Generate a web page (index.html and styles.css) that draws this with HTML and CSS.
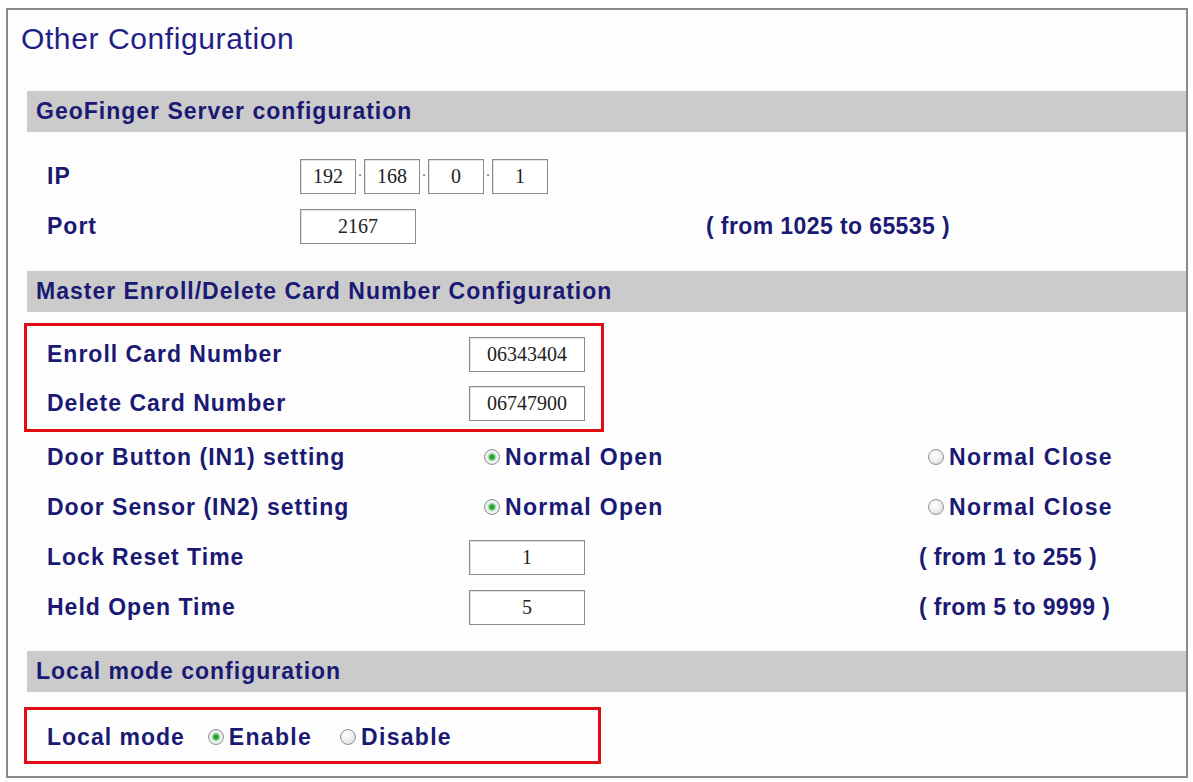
FILE: index.html
```html
<!DOCTYPE html>
<html lang="en">
<head>
  <meta charset="UTF-8" />
  <title>Other Configuration</title>
  <link rel="stylesheet" href="styles.css">
</head>
<body>

<div class="panel">
  <h1 class="title">Other Configuration</h1>

  <div class="bar bar-server">GeoFinger Server configuration</div>
  <div class="server">
    <div class="row">
      <span class="label">IP</span>
      <span class="ip">
        <input class="box ip-part" type="text" value="192" readonly><span class="dot">.</span><input class="box ip-part" type="text" value="168" readonly><span class="dot">.</span><input class="box ip-part" type="text" value="0" readonly><span class="dot">.</span><input class="box ip-part" type="text" value="1" readonly>
      </span>
    </div>
    <div class="row">
      <span class="label">Port</span>
      <span><input class="box" type="text" value="2167" readonly></span>
      <span class="label hint">( from 1025 to 65535 )</span>
    </div>
  </div>

  <div class="bar">Master Enroll/Delete Card Number Configuration</div>
  <div class="card">
    <div class="marked marked-card">
      <div class="row">
        <span class="label">Enroll Card Number</span>
        <span><input class="box" type="text" value="06343404" readonly></span>
      </div>
      <div class="row">
        <span class="label">Delete Card Number</span>
        <span><input class="box" type="text" value="06747900" readonly></span>
      </div>
    </div>
    <div class="row">
      <span class="label">Door Button (IN1) setting</span>
      <span class="opt opt-mid"><i class="radio on"></i>Normal Open</span>
      <span class="opt opt-right"><i class="radio"></i>Normal Close</span>
    </div>
    <div class="row">
      <span class="label">Door Sensor (IN2) setting</span>
      <span class="opt opt-mid"><i class="radio on"></i>Normal Open</span>
      <span class="opt opt-right"><i class="radio"></i>Normal Close</span>
    </div>
    <div class="row">
      <span class="label">Lock Reset Time</span>
      <span><input class="box" type="text" value="1" readonly></span>
      <span class="label hint">( from 1 to 255 )</span>
    </div>
    <div class="row">
      <span class="label">Held Open Time</span>
      <span><input class="box" type="text" value="5" readonly></span>
      <span class="label hint">( from 5 to 9999 )</span>
    </div>
  </div>

  <div class="bar bar-local">Local mode configuration</div>
  <div class="marked marked-local">
    <div class="local-row">
      <span class="label">Local mode</span>
      <span class="opt"><i class="radio on"></i>Enable</span>
      <span class="opt"><i class="radio"></i>Disable</span>
    </div>
  </div>
</div>

</body>
</html>
```

FILE: styles.css
```css
body {
  margin: 0;
  background: #fff;
  font-family: 'Liberation Sans', Arial, sans-serif;
  color: #1a1a74;
}

.panel {
  margin: 8px 0 0 6px;
  width: 1182px;
  height: 770px;
  box-sizing: border-box;
  border: 2px solid #8a8a8a;
  background: #fdfdfd;
}

.title {
  margin: 12px 0 0 13px;
  font-size: 30px;
  font-weight: normal;
  line-height: 34px;
  letter-spacing: 0.6px;
  color: #1f1f86;
}

.bar {
  margin: 20px 0 0 19px;
  height: 41px;
  line-height: 41px;
  padding-left: 9px;
  background: #cbcbcb;
  font-size: 23px;
  font-weight: bold;
  letter-spacing: 1px;
}

.bar-server {
  margin-top: 35px;
}

.label {
  font-size: 23px;
  font-weight: bold;
  letter-spacing: 1px;
  white-space: nowrap;
}

.hint {
  letter-spacing: 0.4px;
}

.row {
  display: grid;
  align-items: center;
}

/* server section */
.server {
  margin: 19px 0 20px;
  padding-left: 39px;
}

.server .row {
  grid-template-columns: 253px 406px auto;
  height: 50px;
}

.ip {
  display: flex;
  align-items: center;
}

.dot {
  width: 8px;
  text-align: center;
  align-self: flex-end;
  margin-bottom: 14px;
  font-family: 'Liberation Serif', serif;
  font-size: 14px;
  color: #555;
}

.box {
  width: 116px;
  height: 35px;
  box-sizing: border-box;
  border: 1px solid #8c8c8c;
  box-shadow: inset 1px 1px 0 #e2e2e2;
  padding: 0;
  background: #fff;
  text-align: center;
  font-family: 'Liberation Serif', serif;
  font-size: 20px;
  color: #222;
  display: block;
}

.box.ip-part {
  width: 56px;
}

/* card section */
.card {
  padding-left: 39px;
}

.card .row {
  grid-template-columns: 422px 450px auto;
  height: 50px;
}

.marked {
  border: 3px solid #e20d14;
  box-sizing: border-box;
}

.marked-card {
  margin: 11px 0 0 -23px;
  width: 580px;
  padding: 4px 0 1px 20px;
}

.marked-card .row {
  height: 49px;
}

.opt {
  display: flex;
  align-items: center;
  font-size: 23px;
  font-weight: bold;
  letter-spacing: 1.3px;
  white-space: nowrap;
}

.opt-mid {
  padding-left: 15px;
}

.opt-right {
  padding-left: 9px;
}

.radio {
  display: inline-block;
  width: 16px;
  height: 16px;
  box-sizing: border-box;
  margin-right: 5px;
  border: 1px solid #8f9496;
  border-radius: 50%;
  background: radial-gradient(circle at 40% 35%, #ffffff 0, #f0f0f0 45%, #cfcfcf 100%);
}

.radio.on {
  background: radial-gradient(circle, #1f9e2a 0, #2aa535 2px, #9fd9a4 3.5px, #f3f6f3 5px, #d2d2d2 100%);
}

/* local section */
.bar-local {
  margin-top: 19px;
}

.marked-local {
  margin: 15px 0 0 16px;
  width: 577px;
  height: 57px;
  padding: 3px 0 0 20px;
}

.local-row {
  display: flex;
  align-items: center;
  height: 48px;
}

.local-row .opt {
  margin-left: 23px;
}

.local-row .opt + .opt {
  margin-left: 28px;
}
```
